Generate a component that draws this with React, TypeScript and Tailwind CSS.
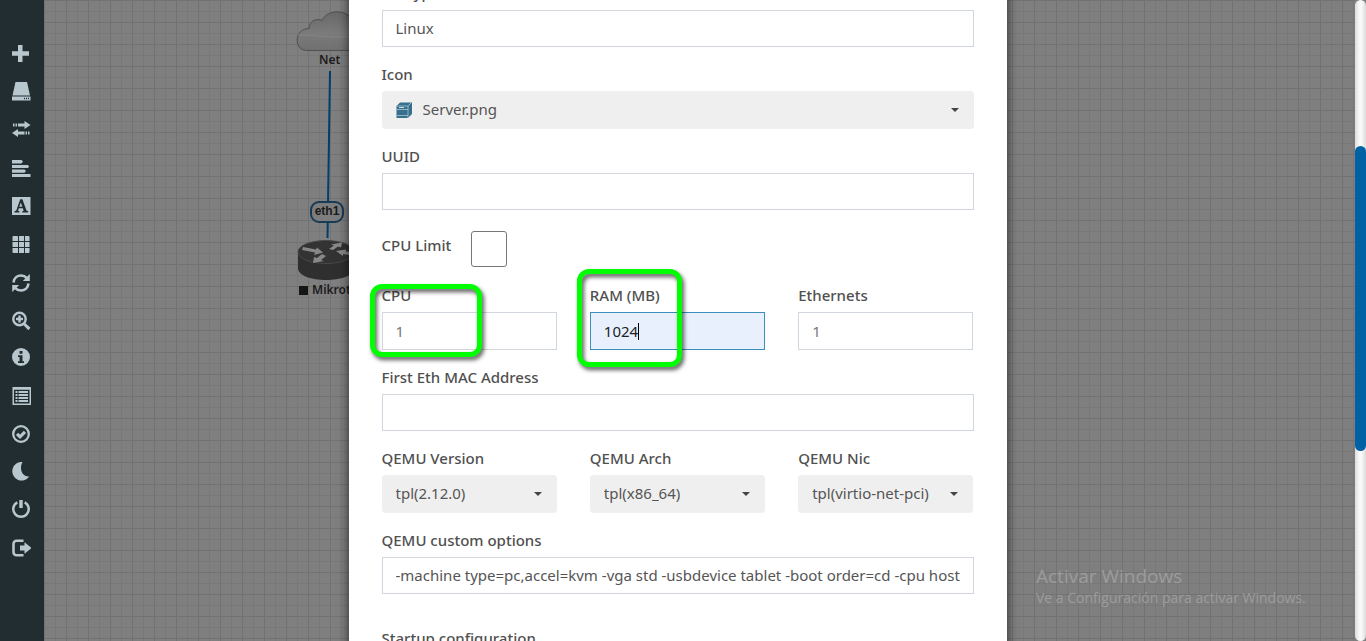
import React from "react";

type IconProps = { children: React.ReactNode };

function Glyph({ children }: IconProps) {
  return (
    <svg viewBox="0 0 20 20" className="h-5 w-5" fill="currentColor" aria-hidden="true">
      {children}
    </svg>
  );
}

const tools: { name: string; icon: React.ReactNode }[] = [
  { name: "Add an object", icon: <path d="M7 1h4.500v6.200H18v4.500h-6.500V18H7v-6.300H1V7.200h6z" /> },
  {
    name: "Nodes",
    icon: (
      <>
        <path d="M4.500 0h11.500l3 13.500H1.500z" />
        <path fillRule="evenodd" d="M1 14.500h18.500V18.500H1zM13 15.800v1.500h1v-1.500zM15 15.800v1.500h1v-1.500zM17 15.800v1.500h1v-1.500z" />
      </>
    ),
  },
  {
    name: "Networks",
    icon: (
      <path d="M2 3.500h1.500v3H2zM4.500 3.500H6v3H4.500zM7 3.500h6.500V1l6 4-6 4V6.500H7zM18.500 11.500H17v3h1.500zM16 11.500h-1.500v3H16zM13.500 11.500H7V9L1 13l6 4v-2.500h6.500z" />
    ),
  },
  {
    name: "Startup-configs",
    icon: (
      <path d="M1 2h9.500l1.500 1.500L10.500 5.500H1zM1 7h16l1 1.500L17 10H1zM1 11.500h12.500L15 13l-1.500 1.800H1zM1 16h18.500v3H1z" />
    ),
  },
  {
    name: "Configured text",
    icon: (
      <path
        fillRule="evenodd"
        d="M1 1h18.500v18H1zM9.200 3.200L5.300 14.600l-1.800.6v1.200H8.400v-1.200L7 14.700l.8-2.500h4l.9 2.500-1.400.5v1.200h5.900v-1.200l-1.700-.6L11.400 3.200zM9.800 6.500l1.500 4.200H8.300z"
      />
    ),
  },
  {
    name: "Text objects",
    icon: (
      <path d="M2.500 2h3.500a1 1 0 0 1 1 1v4H1.500V3a1 1 0 0 1 1-1zM8 2h5v5H8zM14 2h3.500a1 1 0 0 1 1 1v4H14zM1.500 8h5.500v5H1.500zM8 8h5v5H8zM14 8h4.500v5H14zM1.500 14h5.500v5H2.500a1 1 0 0 1-1-1zM8 14h5v5H8zM14 14h4.500v4a1 1 0 0 1-1 1H14z" />
    ),
  },
  {
    name: "Refresh topology",
    icon: (
      <>
        <path d="M2.500 10.500C3 6 6.500 3.500 10 3.500c2.300 0 4.200.8 5.600 2.400M17.500 11.500c-.5 4.500-4 7-7.500 7-2.300 0-4.200-.8-5.600-2.400" fill="none" stroke="currentColor" strokeWidth="2.600" />
        <path d="M18.800 2v7h-7zM1.200 20v-7h7z" />
      </>
    ),
  },
  {
    name: "Zoom",
    icon: (
      <>
        <circle cx="8.500" cy="9" r="6.200" fill="none" stroke="currentColor" strokeWidth="2.400" />
        <path d="M7.300 5.500h2.400v2.300H12v2.400H9.700v2.300H7.300v-2.300H5V7.800h2.300zM12 14.800l2-2 5.500 5-2.200 2.400z" />
      </>
    ),
  },
  {
    name: "Status",
    icon: (
      <path
        fillRule="evenodd"
        d="M10 0a9 9 0 1 0 0 18 9 9 0 0 0 0-18zM8.500 3h3v2.800h-3zM7 7.200h4.500v6H13V15H7v-1.800h1.500V9H7z"
      />
    ),
  },
  {
    name: "Lab details",
    icon: (
      <>
        <path fillRule="evenodd" d="M1.500 1H20v18H1.500zM3 3.700v13.800h15.500V3.700z" />
        <path d="M4.500 5h2v2h-2zM7.500 5H17v2H7.500zM4.500 8h2v2h-2zM7.500 8H17v2H7.500zM4.500 11h2v2h-2zM7.500 11H17v2H7.500zM4.500 14h2v2h-2zM7.500 14H17v2H7.500z" />
      </>
    ),
  },
  {
    name: "Lock lab",
    icon: (
      <>
        <circle cx="10" cy="10" r="7.800" fill="none" stroke="currentColor" strokeWidth="2.300" />
        <path d="M6 9.800l3 3 5-5" fill="none" stroke="currentColor" strokeWidth="3.200" />
      </>
    ),
  },
  {
    name: "Dark mode",
    icon: <path d="M11.500 0a9.300 9.300 0 1 0 6.800 14.500C12 15.500 7.500 7.500 11.500 0z" />,
  },
  {
    name: "Close lab",
    icon: (
      <>
        <path d="M6.300 2.300a7.700 7.700 0 1 0 7.400 0" fill="none" stroke="currentColor" strokeWidth="2.500" />
        <path d="M8.300 0h3.400v8H8.300z" />
      </>
    ),
  },
  {
    name: "Logout",
    icon: (
      <>
        <path d="M12.500 2.700H5.500a3 3 0 0 0-3 3v8.600a3 3 0 0 0 3 3h7" fill="none" stroke="currentColor" strokeWidth="2.600" />
        <path d="M9 7.500h4.500V4.200l7 5.800-7 5.800v-3.300H9z" />
      </>
    ),
  },
];

const labelClass = "block h-5 whitespace-nowrap text-[15px] leading-5 font-medium text-[#505050]";
const inputClass =
  "mt-[7px] block h-[37px] w-full rounded-none border border-[#d2d6de] bg-white px-[13px] pb-[2px] text-[15px] text-[#555] outline-none";
const numberClass =
  "mt-[7px] block h-[38px] w-full rounded-none border border-[#d2d6de] bg-white px-[13px] text-[15px] text-[#777] outline-none";
const selectClass =
  "block h-[38px] w-full appearance-none rounded bg-[#efefef] pr-6 pb-[2px] text-[15px] text-[#555] outline-none";

function TextField({ id, label, value = "" }: { id: string; label: string; value?: string }) {
  return (
    <div>
      <label htmlFor={id} className={labelClass}>{label}</label>
      <input id={id} type="text" defaultValue={value} className={inputClass} />
    </div>
  );
}

function Caret() {
  return (
    <svg viewBox="0 0 8 4" className="pointer-events-none absolute top-1/2 right-[15px] h-1 w-2 -translate-y-1/2" aria-hidden="true">
      <path d="M0 0h8L4 4z" fill="#444" />
    </svg>
  );
}

function SelectField({ id, label, value }: { id: string; label: string; value: string }) {
  return (
    <div>
      <label htmlFor={id} className={labelClass}>{label}</label>
      <div className="relative mt-[7px]">
        <select id={id} className={`${selectClass} pl-[14px]`}>
          <option>{value}</option>
        </select>
        <Caret />
      </div>
    </div>
  );
}

function Topology() {
  return (
    <div className="relative min-w-0 flex-1">
      <svg className="absolute top-0 left-[240px]" width="90" height="300" viewBox="0 0 90 300" aria-hidden="true">
        <defs>
          <linearGradient id="cloud" x1="0" y1="0" x2="0" y2="1">
            <stop offset="0" stopColor="#686868" />
            <stop offset=".55" stopColor="#7b7b7b" />
            <stop offset="1" stopColor="#707070" />
          </linearGradient>
        </defs>
        <path
          d="M23 50.500C9 50.500 10 28.500 25 28.500C25 20 34 18 38 20.500C43 9 63 9 68 20C78 18 86 26 84 36C84 46 80 50.500 74 50.500z"
          fill="url(#cloud)"
          stroke="#505056"
        />
        <path d="M14 35c24 0 34 5 70-1" fill="none" stroke="#858585" strokeWidth="1" />
        <path d="M46 71L43.500 238" stroke="#003e6b" strokeWidth="2" />
        <path d="M14 253v15c0 16 56 16 56 0v-15z" fill="#2f2f2f" />
        <ellipse cx="42" cy="252" rx="28" ry="11.500" fill="#333" stroke="#484848" />
        <path
          d="M19 247l13 2.500 1-2 6 5-9 2.500 1-2.500-13-2.500zM45 249l5-3.500-3-1 11-2-1 5-3-1-5 3.500zM72 256l-13-2v2l-7-5 10-1.500v2l11 1.500zM42 256l-5 4 3 1-11 2 1-6 3 1 5-4z"
          fill="#888"
        />
      </svg>
      <span className="absolute top-[52px] left-[275px] text-[12px] leading-4 font-semibold text-[#1c1c1c]">Net</span>
      <span className="absolute top-[201px] left-[266px] h-[22px] w-[34px] rounded-[9px] border-2 border-[#173b55] bg-[#7d7d7d] text-center font-['Liberation_Sans',sans-serif] text-[12px] leading-[17px] font-bold text-[#1a1a1a]">
        eth1
      </span>
      <span className="absolute top-[282px] left-[255px] flex items-center gap-1 text-[12px] leading-4 font-semibold text-[#1c1c1c]">
        <i className="h-[9px] w-[9px] bg-[#151515]" />
        Mikrotik
      </span>
    </div>
  );
}

export default function App() {
  return (
    <div className="relative flex h-screen overflow-hidden bg-[#7f7f7f] bg-[linear-gradient(#727272_1px,transparent_1px),linear-gradient(90deg,#727272_1px,transparent_1px),linear-gradient(#787878_1px,transparent_1px),linear-gradient(90deg,#787878_1px,transparent_1px)] bg-[size:22px_22px,22px_22px,11px_11px,11px_11px] font-['Noto_Sans',sans-serif]">
      <nav aria-label="Lab tools" className="flex w-11 shrink-0 flex-col bg-[#222d32] pt-[35px]">
        {tools.map((t) => (
          <button key={t.name} type="button" aria-label={t.name} className="flex h-[38px] w-full items-center pl-[11px] text-[#b8c7ce]">
            <Glyph>{t.icon}</Glyph>
          </button>
        ))}
      </nav>

      <Topology />

      <aside className="absolute right-[54px] bottom-[33px] w-[276px] whitespace-nowrap font-['Open_Sans',sans-serif] text-[#9c9c9c]">
        <p className="text-[19px] leading-6">Activar Windows</p>
        <p className="text-[14px] leading-5">Ve a Configuración para activar Windows.</p>
      </aside>

      <div className="pointer-events-none absolute inset-y-0 right-[11px] left-0 flex justify-center overflow-hidden">
        <form className="pointer-events-auto -mt-[17px] flex h-[800px] w-full max-w-[658px] flex-col gap-[17px] bg-white px-[33px] shadow-[0_2px_10px_rgba(0,0,0,0.7)]">
          <TextField id="name" label="OS Type" value="Linux" />

          <div>
            <label htmlFor="icon" className={labelClass}>Icon</label>
            <div className="relative mt-[7px]">
              <select id="icon" className={`${selectClass} pl-[41px]`}>
                <option>Server.png</option>
              </select>
              <svg viewBox="0 0 16 16" className="pointer-events-none absolute top-[11px] left-[14px] h-4 w-4" aria-hidden="true">
                <path d="M.5 4L4 .5h12V12l-4 4H.5z" fill="#36708d" />
                <path d="M.5 4H12l3.500-3.500M12 4v12M.5 7.500H12M.5 13.500H12" fill="none" stroke="#a9c5d2" strokeWidth=".8" />
                <path d="M3 5.500h5" stroke="#c9dce5" />
              </svg>
              <Caret />
            </div>
          </div>

          <TextField id="uuid" label="UUID" />

          <div className="mt-1 mb-px flex gap-5">
            <label htmlFor="limit" className={`${labelClass} mt-1`}>CPU Limit</label>
            <input id="limit" type="checkbox" className="h-9 w-9 appearance-none rounded-[3px] border border-[#767676] bg-white" />
          </div>

          <div className="grid grid-cols-3 gap-x-[33px]">
            <div className="relative">
              <label htmlFor="cpu" className={labelClass}>CPU</label>
              <input id="cpu" type="text" defaultValue="1" className={numberClass} />
              <div className="pointer-events-none absolute -top-px -left-3 h-[73px] w-28 rounded-xl border-[5px] border-[#00ff00] drop-shadow-[2px_3px_2px_rgba(0,0,0,0.65)]" />
            </div>
            <div className="relative">
              <label htmlFor="ram" className={labelClass}>RAM (MB)</label>
              <div className="relative mt-[7px]">
                <input
                  id="ram"
                  type="text"
                  defaultValue="1024"
                  className="block h-[38px] w-full border border-[#3c8dbc] bg-[#e8f0fe] px-[13px] text-[15px] text-[#222] outline-none"
                />
                <span className="pointer-events-none absolute top-[11px] left-12 h-[17px] w-px bg-black" />
              </div>
              <div className="pointer-events-none absolute -top-4 -left-[13px] h-[98px] w-[105px] rounded-xl border-[5px] border-[#00ff00] drop-shadow-[2px_3px_2px_rgba(0,0,0,0.65)]" />
            </div>
            <div>
              <label htmlFor="eth" className={labelClass}>Ethernets</label>
              <input id="eth" type="text" defaultValue="1" className={numberClass} />
            </div>
          </div>

          <TextField id="mac" label="First Eth MAC Address" />

          <div className="grid grid-cols-3 gap-x-[33px]">
            <SelectField id="qver" label="QEMU Version" value="tpl(2.12.0)" />
            <SelectField id="qarch" label="QEMU Arch" value="tpl(x86_64)" />
            <SelectField id="qnic" label="QEMU Nic" value="tpl(virtio-net-pci)" />
          </div>

          <TextField
            id="qopt"
            label="QEMU custom options"
            value="-machine type=pc,accel=kvm -vga std -usbdevice tablet -boot order=cd -cpu host"
          />

          <div className="mt-[17px]">
            <label htmlFor="startup" className={labelClass}>Startup configuration</label>
            <select id="startup" className={`${selectClass} mt-[7px] pl-[14px]`} />
          </div>
        </form>
      </div>

      <div className="z-10 w-[11px] shrink-0 bg-[#7f7f7f]">
        <div className="h-full rounded-md bg-[linear-gradient(90deg,#dcdcdc,#f8f8f8_40%,#f8f8f8_60%,#dcdcdc)] pt-[146px]">
          <div className="h-[305px] rounded-md bg-[#0061a5]" />
        </div>
      </div>
    </div>
  );
}
